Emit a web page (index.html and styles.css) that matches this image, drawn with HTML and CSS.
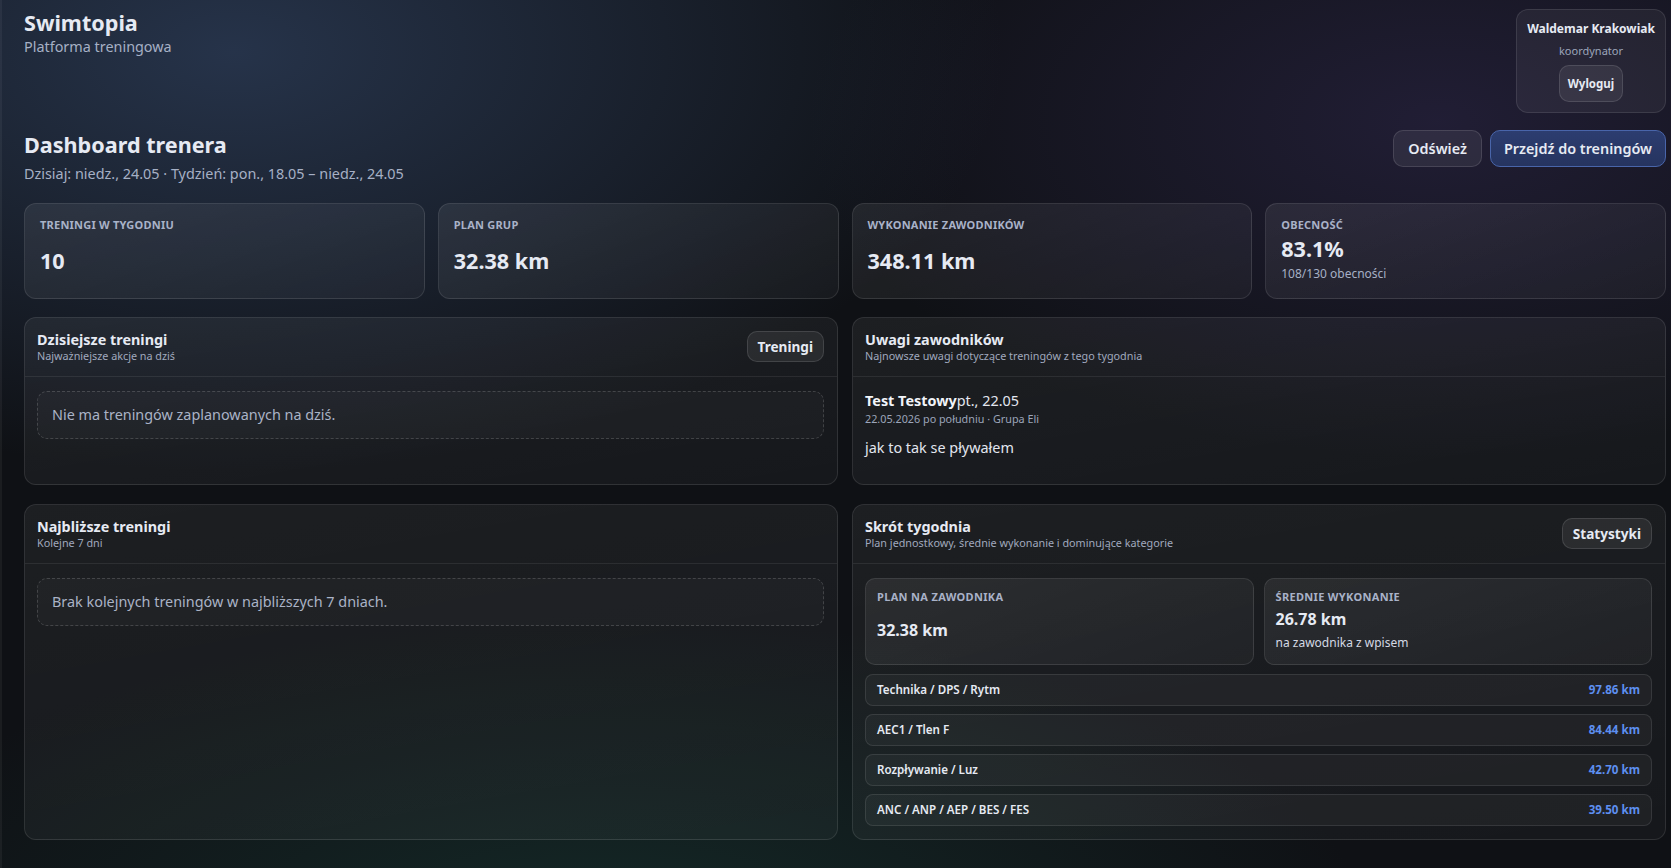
FILE: index.html
```html
<!DOCTYPE html>
<html lang="pl">
<head>
    <meta charset="UTF-8">
    <meta name="viewport" content="width=device-width, initial-scale=1.0">
    <title>Swimtopia – Dashboard trenera</title>
    <link rel="stylesheet" href="styles.css">
</head>
<body>
    <div class="app">
        <header class="topbar">
            <div class="brand">
                <div class="brand-name">Swimtopia</div>
                <div class="brand-sub">Platforma treningowa</div>
            </div>
            <div class="user-box">
                <div class="user-name">Waldemar Krakowiak</div>
                <div class="user-role">koordynator</div>
                <button class="btn btn-small">Wyloguj</button>
            </div>
        </header>

        <section class="page-head">
            <div>
                <h1 class="page-title">Dashboard trenera</h1>
                <p class="page-sub">Dzisiaj: niedz., 24.05 · Tydzień: pon., 18.05 – niedz., 24.05</p>
            </div>
            <div class="page-actions">
                <button class="btn">Odśwież</button>
                <button class="btn btn-primary">Przejdź do treningów</button>
            </div>
        </section>

        <section class="stats">
            <div class="stat-card stat-card--plain">
                <div class="stat-label">Treningi w tygodniu</div>
                <div class="stat-value">10</div>
            </div>
            <div class="stat-card stat-card--plain">
                <div class="stat-label">Plan grup</div>
                <div class="stat-value">32.38 km</div>
            </div>
            <div class="stat-card stat-card--plain">
                <div class="stat-label">Wykonanie zawodników</div>
                <div class="stat-value">348.11 km</div>
            </div>
            <div class="stat-card">
                <div class="stat-label">Obecność</div>
                <div class="stat-value">83.1%</div>
                <div class="stat-hint">108/130 obecności</div>
            </div>
        </section>

        <section class="panels">
            <div class="panel">
                <div class="panel-head">
                    <div>
                        <h2 class="panel-title">Dzisiejsze treningi</h2>
                        <div class="panel-sub">Najważniejsze akcje na dziś</div>
                    </div>
                    <button class="btn btn-small btn-head">Treningi</button>
                </div>
                <div class="panel-body">
                    <div class="empty">Nie ma treningów zaplanowanych na dziś.</div>
                </div>
            </div>

            <div class="panel">
                <div class="panel-head">
                    <div>
                        <h2 class="panel-title">Uwagi zawodników</h2>
                        <div class="panel-sub">Najnowsze uwagi dotyczące treningów z tego tygodnia</div>
                    </div>
                </div>
                <div class="panel-body">
                    <div class="note">
                        <div class="note-head"><strong>Test Testowy</strong>pt., 22.05</div>
                        <div class="note-meta">22.05.2026 po południu · Grupa Eli</div>
                        <p class="note-text">jak to tak se pływałem</p>
                    </div>
                </div>
            </div>

            <div class="panel">
                <div class="panel-head">
                    <div>
                        <h2 class="panel-title">Najbliższe treningi</h2>
                        <div class="panel-sub">Kolejne 7 dni</div>
                    </div>
                </div>
                <div class="panel-body">
                    <div class="empty">Brak kolejnych treningów w najbliższych 7 dniach.</div>
                </div>
            </div>

            <div class="panel">
                <div class="panel-head">
                    <div>
                        <h2 class="panel-title">Skrót tygodnia</h2>
                        <div class="panel-sub">Plan jednostkowy, średnie wykonanie i dominujące kategorie</div>
                    </div>
                    <button class="btn btn-small btn-head">Statystyki</button>
                </div>
                <div class="panel-body summary">
                    <div class="mini-stats">
                        <div class="mini-card mini-card--plain">
                            <div class="stat-label">Plan na zawodnika</div>
                            <div class="mini-value">32.38 km</div>
                        </div>
                        <div class="mini-card">
                            <div class="stat-label">Średnie wykonanie</div>
                            <div class="mini-value">26.78 km</div>
                            <div class="mini-hint">na zawodnika z wpisem</div>
                        </div>
                    </div>
                    <ul class="categories">
                        <li><span>Technika / DPS / Rytm</span><b>97.86 km</b></li>
                        <li><span>AEC1 / Tlen F</span><b>84.44 km</b></li>
                        <li><span>Rozpływanie / Luz</span><b>42.70 km</b></li>
                        <li><span>ANC / ANP / AEP / BES / FES</span><b>39.50 km</b></li>
                    </ul>
                </div>
            </div>
        </section>
    </div>
</body>
</html>
```

FILE: styles.css
```css
* {
    margin: 0;
    padding: 0;
    box-sizing: border-box;
}

body {
    font-family: 'Noto Sans', 'Open Sans', sans-serif;
    color: #e6eaf3;
    background:
        radial-gradient(1100px 600px at 14% 6%, rgba(52, 72, 106, 0.62), transparent 70%),
        radial-gradient(900px 480px at 86% 14%, rgba(62, 50, 104, 0.38), transparent 70%),
        radial-gradient(1100px 460px at 36% 108%, rgba(30, 84, 72, 0.36), transparent 70%),
        #0f1115;
    min-height: 100vh;
}

.app {
    border-left: 2px solid rgba(255, 255, 255, 0.05);
    padding: 9px 5px 16px 22px;
    min-height: 100vh;
    display: flex;
    flex-direction: column;
}

/* header */

.topbar {
    display: flex;
    justify-content: space-between;
    align-items: flex-start;
}

.brand-name {
    font-size: 21.6px;
    font-weight: 700;
    line-height: 1.2;
    margin-top: 1px;
}

.brand-sub {
    font-size: 14.4px;
    line-height: 20px;
    color: #a6b0c5;
    margin-top: 1px;
}

.user-box {
    width: 150px;
    padding: 10px 12px;
    display: flex;
    flex-direction: column;
    align-items: center;
    gap: 6px;
    background: rgba(255, 255, 255, 0.055);
    border: 1px solid rgba(255, 255, 255, 0.1);
    border-radius: 12px;
}

.user-name {
    font-size: 12px;
    font-weight: 700;
    line-height: 17px;
    white-space: nowrap;
}

.user-role {
    font-size: 11px;
    line-height: 16px;
    color: #9ca5ba;
}

/* buttons */

.btn {
    font-family: inherit;
    font-size: 14.4px;
    font-weight: 600;
    color: #e6eaf3;
    height: 37px;
    padding: 0 14px;
    background: rgba(255, 255, 255, 0.07);
    border: 1px solid rgba(255, 255, 255, 0.12);
    border-radius: 10px;
    cursor: pointer;
}

.btn-primary {
    padding: 0 13px;
    background: linear-gradient(180deg, #2c3d70, #26345f);
    border-color: #4965aa;
}

.btn-small {
    font-size: 11.5px;
    font-weight: 700;
    padding: 0 8px;
}

.btn-head {
    font-size: 13.6px;
    height: 31px;
    padding: 0 10px;
}

/* page title */

.page-head {
    display: flex;
    justify-content: space-between;
    align-items: flex-start;
    margin-top: 17px;
}

.page-title {
    font-size: 21.6px;
    font-weight: 700;
    line-height: 1.2;
    margin: 2px 0 6px;
}

.page-sub {
    font-size: 14.4px;
    line-height: 20px;
    color: #a6b0c5;
}

.page-actions {
    display: flex;
    gap: 8px;
}

/* stat cards */

.stats {
    display: grid;
    grid-template-columns: repeat(4, 1fr);
    gap: 13px;
    margin-top: 19px;
}

.stat-card {
    height: 96px;
    padding: 14px 15px;
    display: flex;
    flex-direction: column;
    gap: 4px;
    background: linear-gradient(160deg, rgba(255, 255, 255, 0.075), rgba(255, 255, 255, 0.035));
    border: 1px solid rgba(255, 255, 255, 0.1);
    border-radius: 12px;
}

.stat-label {
    font-size: 11px;
    font-weight: 700;
    line-height: 14px;
    letter-spacing: 0.02em;
    text-transform: uppercase;
    color: #a9b2c8;
}

.stat-value {
    font-size: 21.6px;
    font-weight: 700;
    line-height: 1.2;
}

.stat-card--plain .stat-value {
    margin: auto 0;
    padding-top: 3px;
}

.stat-hint {
    font-size: 12px;
    line-height: 16px;
    color: #a6b0c5;
}

/* panels */

.panels {
    display: grid;
    grid-template-columns: 1fr 1fr;
    gap: 19px 14px;
    margin-top: 18px;
}

.panel {
    display: flex;
    flex-direction: column;
    background: linear-gradient(170deg, rgba(255, 255, 255, 0.06), rgba(255, 255, 255, 0.03));
    border: 1px solid rgba(255, 255, 255, 0.1);
    border-radius: 12px;
}

.panel-head {
    display: flex;
    justify-content: space-between;
    align-items: center;
    padding: 12px 13px 12px 12px;
    min-height: 59px;
    border-bottom: 1px solid rgba(255, 255, 255, 0.08);
}

.panel-title {
    font-size: 14.4px;
    font-weight: 700;
    line-height: 19px;
}

.panel-sub {
    font-size: 10.8px;
    line-height: 14px;
    color: #a0a9be;
}

.panel-body {
    padding: 14px 13px 14px 12px;
}

.empty {
    font-size: 14.4px;
    line-height: 20px;
    color: #aab3c6;
    padding: 13px 14px;
    background: rgba(255, 255, 255, 0.025);
    border: 1px dashed rgba(255, 255, 255, 0.16);
    border-radius: 10px;
}

.note {
    padding-bottom: 11px;
}

.note-head {
    font-size: 14.4px;
    line-height: 20px;
    color: #e2e6ef;
}

.note-head strong {
    color: #f1f4f9;
}

.note-meta {
    font-size: 10.8px;
    line-height: 16px;
    color: #9ca5ba;
}

.note-text {
    font-size: 14.4px;
    line-height: 22px;
    margin-top: 10px;
    color: #e2e6ef;
}

/* week summary */

.summary {
    display: flex;
    flex-direction: column;
    gap: 9px;
    padding-bottom: 13px;
}

.mini-stats {
    display: grid;
    grid-template-columns: 1fr 1fr;
    gap: 10px;
}

.mini-card {
    height: 87px;
    padding: 11px 11px 12px;
    display: flex;
    flex-direction: column;
    gap: 6px;
    background: linear-gradient(160deg, rgba(255, 255, 255, 0.07), rgba(255, 255, 255, 0.035));
    border: 1px solid rgba(255, 255, 255, 0.1);
    border-radius: 10px;
}

.mini-card .stat-label {
    letter-spacing: 0.03em;
}

.mini-value {
    font-size: 16px;
    font-weight: 700;
    line-height: 1.2;
}

.mini-card--plain .mini-value {
    margin: auto 0;
}

.mini-hint {
    font-size: 12px;
    line-height: 16px;
    color: #d4d9e4;
}

.categories {
    list-style: none;
    display: flex;
    flex-direction: column;
    gap: 8px;
}

.categories li {
    display: flex;
    justify-content: space-between;
    align-items: center;
    padding: 7px 11px;
    font-size: 11.6px;
    line-height: 16px;
    background: rgba(255, 255, 255, 0.04);
    border: 1px solid rgba(255, 255, 255, 0.1);
    border-radius: 8px;
}

.categories span {
    font-weight: 600;
}

.categories b {
    font-weight: 700;
    color: #5d8ff0;
}
```
